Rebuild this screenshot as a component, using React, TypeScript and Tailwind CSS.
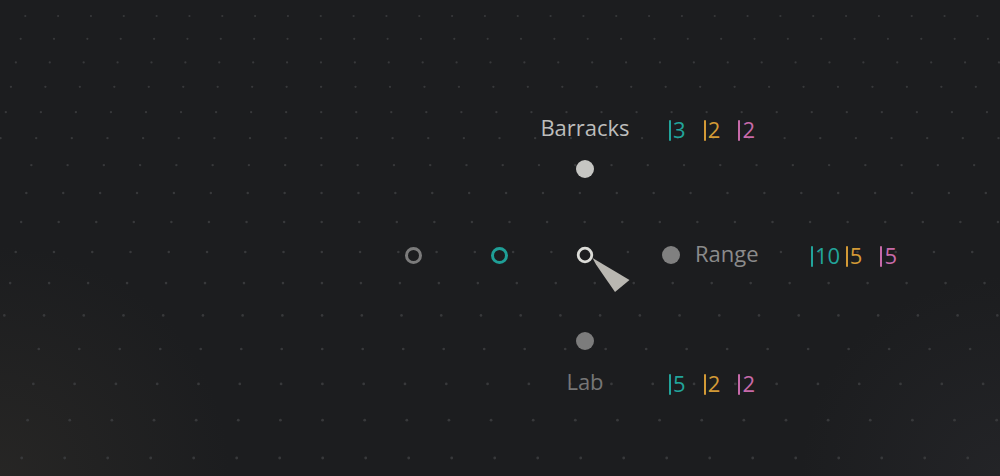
import React, { useMemo } from "react";

const VX = 314.5;
const YH = -1410.8;
const K = 90488;
const Z0 = 63.42;
const B = 0.02301;
const PHASE = 0.191;

function DotGrid() {
  const dots = useMemo(() => {
    const out: { x: number; y: number; r: number }[] = [];
    for (let j = -1; j <= 17; j++) {
      const y = K / (Z0 - j) + YH;
      if (y < -5 || y > 481) continue;
      const s = B * (y - YH);
      const nMin = Math.floor((-10 - VX) / s) - 1;
      const nMax = Math.ceil((1010 - VX) / s) + 1;
      for (let n = nMin; n <= nMax; n++) {
        const x = VX + (n + PHASE) * s;
        if (x < -4 || x > 1004) continue;
        out.push({ x, y, r: 1.2 * (s / 36) });
      }
    }
    return out;
  }, []);
  return (
    <svg className="absolute inset-0" width={1000} height={476} viewBox="0 0 1000 476">
      <defs>
        <radialGradient id="glowL" cx="0" cy="476" r="230" gradientUnits="userSpaceOnUse">
          <stop offset="0" stopColor="#3a362f" stopOpacity="0.35" />
          <stop offset="1" stopColor="#3a362f" stopOpacity="0" />
        </radialGradient>
        <radialGradient id="glowR" cx="1000" cy="476" r="200" gradientUnits="userSpaceOnUse">
          <stop offset="0" stopColor="#34343a" stopOpacity="0.3" />
          <stop offset="1" stopColor="#34343a" stopOpacity="0" />
        </radialGradient>
      </defs>
      <rect x="0" y="0" width="1000" height="476" fill="url(#glowL)" />
      <rect x="0" y="0" width="1000" height="476" fill="url(#glowR)" />
      {dots.map((d, i) => (
        <circle key={i} cx={d.x} cy={d.y} r={d.r} fill="#38393b" />
      ))}
    </svg>
  );
}

function Cell({ value, cls }: { value: string; cls: string }) {
  return (
    <div className={`flex w-[34.7px] items-center h-[30px] ${cls}`}>
      <span className="inline-block w-[2px] h-[21px] rounded-[1px] bg-current translate-y-[1px]" />
      <span className="ml-[2px] text-[22px] leading-[30px]">{value}</span>
    </div>
  );
}

function Counts({ values }: { values: string[] }) {
  return (
    <div className="flex translate-y-[2px]">
      <Cell value={values[0]} cls="text-[#22a49b]" />
      <Cell value={values[1]} cls="text-[#d39a36]" />
      <Cell value={values[2]} cls="text-[#c76aa9]" />
    </div>
  );
}

function Dot({ cls }: { cls: string }) {
  return <div className={`w-[18px] h-[18px] rounded-full ${cls}`} />;
}

function Ring({ cls }: { cls: string }) {
  return <div className={`w-[17px] h-[17px] rounded-full border-[3px] ${cls}`} />;
}

function Pointer() {
  return (
    <div className="relative w-[18px] h-[18px]">
      <svg className="absolute left-0 top-0 overflow-visible" width="18" height="18" viewBox="576 246 18 18">
        <polygon points="592.5,258 629.5,280 615,292 596,264.5" fill="#b9b7b1" />
        <circle cx="585" cy="255" r="6.8" fill="none" stroke="#dcdcd8" strokeWidth="2.8" />
      </svg>
    </div>
  );
}

export default function App() {
  return (
    <div
      className="relative w-[1000px] h-[476px] overflow-hidden bg-[#1c1d1f]"
      style={{ fontFamily: '"Open Sans", "Liberation Sans", sans-serif' }}
    >
      <DotGrid />

      {/* diagram canvas: 4 columns x 3 rows of 86px cells, centred on the nodes */}
      <div className="absolute left-[370px] top-[126px] grid grid-cols-[repeat(4,86px)] grid-rows-[repeat(3,86px)] place-items-center">
        {/* row 1 */}
        <div />
        <div />
        <div className="relative flex items-center justify-center w-full h-full">
          <Dot cls="bg-[#c6c6c3]" />
          <div className="absolute left-[-44px] top-[-14px] flex items-center">
            <div className="w-[174px] text-center text-[22px] leading-[30px] text-[#bdbdbc]">Barracks</div>
            <div className="ml-[-3px]">
              <Counts values={["3", "2", "2"]} />
            </div>
          </div>
        </div>
        <div />

        {/* row 2 */}
        <Ring cls="border-[#7b7b7b]" />
        <Ring cls="border-[#1f9f97]" />
        <Pointer />
        <div className="relative flex items-center justify-center w-full h-full">
          <Dot cls="bg-[#808080]" />
          <div className="absolute left-[67px] top-[26px] flex items-center">
            <div className="w-[116px] text-[22px] leading-[30px] text-[#8b8b8b]">Range</div>
            <Counts values={["10", "5", "5"]} />
          </div>
        </div>

        {/* row 3 */}
        <div />
        <div />
        <div className="relative flex items-center justify-center w-full h-full">
          <Dot cls="bg-[#7c7c7c]" />
          <div className="absolute left-[-44px] top-[68px] flex items-center">
            <div className="w-[174px] text-center text-[22px] leading-[30px] text-[#767676]">Lab</div>
            <div className="ml-[-3px]">
              <Counts values={["5", "2", "2"]} />
            </div>
          </div>
        </div>
        <div />
      </div>
    </div>
  );
}
